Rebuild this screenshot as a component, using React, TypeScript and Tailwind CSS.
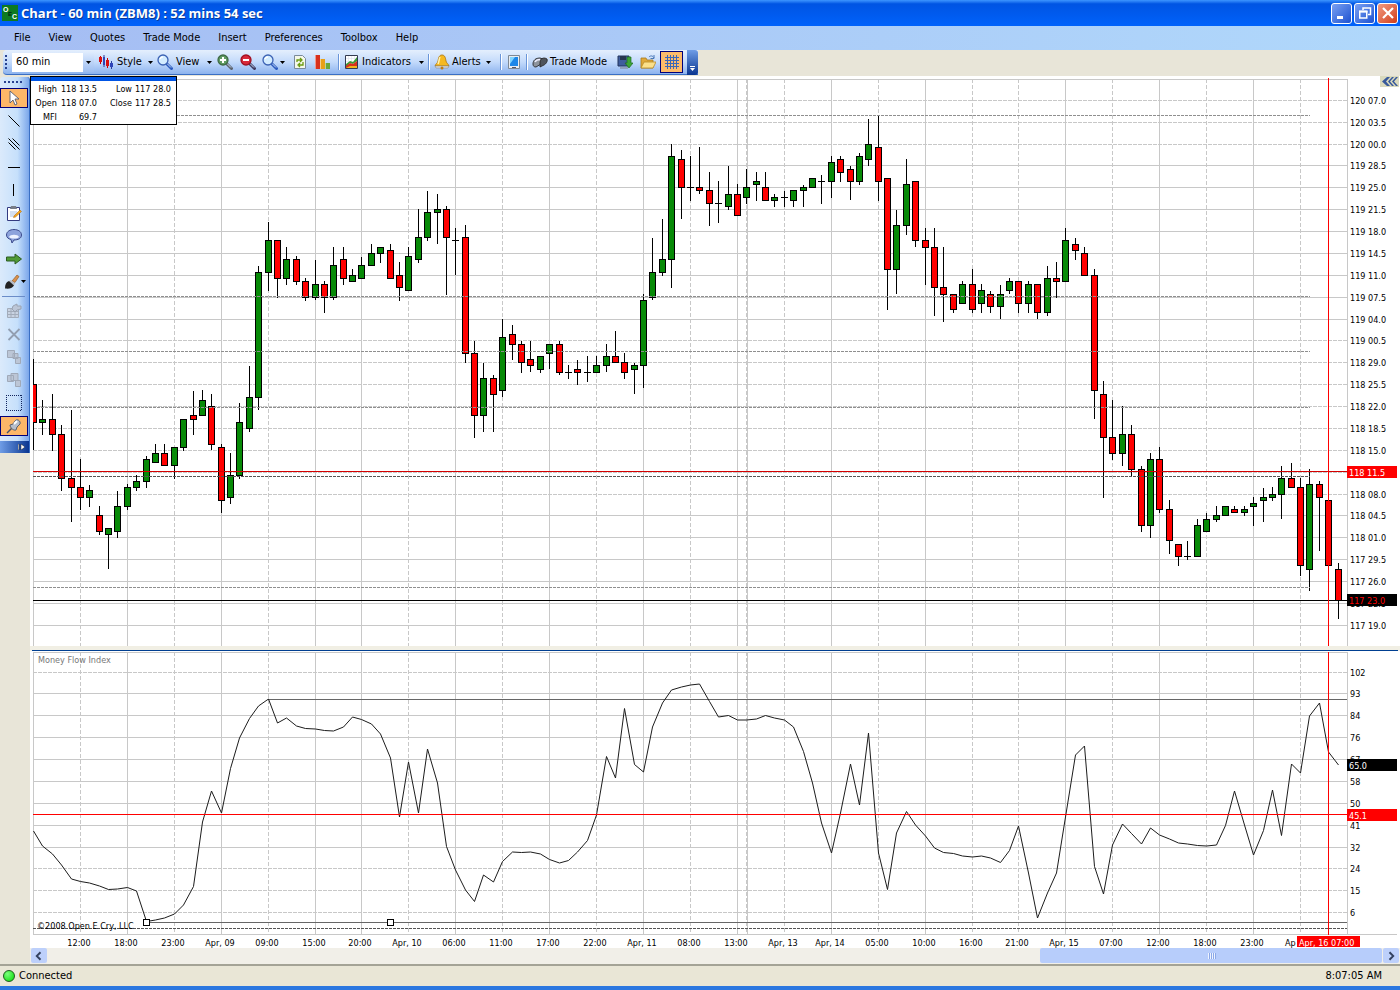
import type { ReactNode } from "react";

type Candle = [high: number, top: number, bottom: number, low: number, dir: "u" | "d" | "n"];

// one entry per bar: high, body top, body bottom, low, direction
const candles: Candle[] = [
  [359, 384, 423, 450, "d"], [400, 419, 423, 435, "u"], [394, 419, 435, 451, "d"], [425, 434, 479, 491, "d"],
  [410, 478, 488, 522, "d"], [459, 487, 498, 510, "d"], [485, 490, 498, 507, "u"], [506, 515, 532, 535, "d"],
  [528, 528, 535, 569, "u"], [491, 506, 532, 538, "u"], [484, 487, 507, 510, "u"], [475, 481, 488, 491, "u"],
  [456, 459, 482, 488, "u"], [444, 453, 463, 463, "u"], [444, 453, 466, 466, "d"], [447, 447, 466, 479, "u"],
  [419, 419, 448, 451, "u"], [391, 415, 420, 435, "d"], [390, 400, 416, 416, "u"], [394, 406, 445, 450, "d"],
  [444, 447, 501, 513, "d"], [453, 475, 498, 504, "u"], [403, 422, 476, 479, "u"], [366, 397, 429, 432, "u"],
  [266, 272, 398, 410, "u"], [222, 240, 273, 291, "u"], [240, 240, 279, 298, "d"], [247, 259, 279, 285, "u"],
  [256, 259, 282, 285, "d"], [278, 281, 298, 301, "d"], [260, 284, 298, 300, "u"], [281, 284, 298, 313, "d"],
  [247, 265, 298, 300, "u"], [247, 259, 279, 285, "d"], [269, 275, 282, 282, "u"], [257, 265, 279, 279, "u"],
  [244, 253, 266, 266, "u"], [247, 247, 254, 263, "u"], [244, 250, 279, 279, "d"], [262, 275, 288, 301, "d"],
  [247, 256, 291, 291, "u"], [209, 237, 260, 263, "u"], [191, 212, 238, 241, "u"], [194, 209, 213, 244, "u"],
  [206, 209, 238, 295, "d"], [228, 240, 241, 275, "n"], [225, 237, 354, 363, "d"], [341, 353, 416, 438, "d"],
  [363, 378, 416, 432, "u"], [375, 378, 395, 432, "d"], [319, 337, 391, 397, "u"], [325, 334, 345, 360, "d"],
  [341, 344, 363, 373, "d"], [341, 359, 366, 372, "d"], [356, 356, 370, 373, "u"], [344, 344, 354, 369, "u"],
  [341, 344, 373, 375, "d"], [365, 372, 373, 379, "n"], [360, 369, 373, 385, "d"], [356, 372, 373, 382, "n"],
  [356, 365, 373, 373, "u"], [344, 356, 366, 372, "u"], [331, 356, 363, 363, "d"], [353, 362, 373, 379, "d"],
  [363, 365, 370, 394, "u"], [294, 300, 366, 388, "u"], [238, 272, 298, 300, "u"], [219, 259, 273, 276, "u"],
  [144, 156, 260, 288, "u"], [150, 159, 188, 219, "d"], [156, 187, 188, 201, "n"], [147, 187, 191, 194, "d"],
  [172, 190, 204, 226, "d"], [181, 203, 204, 223, "n"], [166, 194, 207, 210, "u"], [184, 194, 216, 216, "d"],
  [169, 187, 198, 204, "u"], [172, 181, 185, 201, "u"], [172, 187, 201, 201, "d"], [194, 197, 201, 207, "u"],
  [191, 197, 198, 207, "n"], [190, 190, 201, 207, "u"], [185, 187, 191, 207, "u"], [178, 178, 188, 188, "u"],
  [175, 181, 182, 204, "n"], [156, 162, 182, 198, "u"], [156, 159, 173, 182, "d"], [166, 169, 182, 200, "d"],
  [153, 156, 182, 185, "u"], [119, 144, 160, 166, "u"], [116, 147, 182, 201, "d"], [178, 178, 270, 310, "d"],
  [210, 225, 270, 294, "u"], [159, 184, 226, 235, "u"], [181, 181, 241, 247, "d"], [228, 240, 248, 285, "d"],
  [228, 247, 288, 316, "d"], [247, 287, 295, 322, "d"], [294, 294, 310, 313, "d"], [281, 284, 304, 304, "u"],
  [269, 284, 310, 313, "d"], [284, 290, 304, 313, "u"], [291, 294, 307, 313, "d"], [285, 294, 307, 319, "u"],
  [278, 281, 291, 294, "u"], [281, 281, 304, 313, "d"], [281, 284, 304, 313, "u"], [284, 284, 313, 319, "d"],
  [266, 278, 313, 316, "u"], [262, 278, 282, 298, "d"], [228, 240, 282, 282, "u"], [238, 244, 251, 260, "d"],
  [247, 253, 276, 276, "d"], [269, 275, 391, 419, "d"], [381, 394, 438, 498, "d"], [400, 437, 454, 460, "d"],
  [406, 434, 454, 466, "u"], [425, 434, 470, 476, "d"], [466, 469, 526, 532, "d"], [453, 459, 526, 538, "u"],
  [447, 459, 510, 513, "d"], [500, 509, 541, 554, "d"], [544, 544, 557, 566, "d"], [541, 556, 557, 560, "n"],
  [519, 525, 557, 557, "u"], [513, 519, 532, 532, "u"], [506, 515, 520, 522, "u"], [506, 506, 516, 516, "u"],
  [506, 509, 513, 513, "d"], [506, 509, 513, 516, "u"], [497, 503, 507, 526, "u"], [488, 497, 501, 522, "u"],
  [487, 494, 498, 501, "u"], [466, 478, 495, 519, "u"], [463, 478, 488, 488, "d"], [478, 487, 566, 576, "d"],
  [469, 484, 570, 591, "u"], [481, 484, 498, 551, "d"], [500, 500, 566, 566, "d"], [563, 569, 601, 619, "d"],
];

const mfi = [
  831, 846, 854, 865, 879, 881.5, 883, 886, 889.5, 889, 887.5, 891, 921.5, 920, 918, 914, 905, 886.5, 822, 791,
  813, 768.5, 738, 718.5, 706, 699, 723, 718, 726, 728.5, 729, 730.5, 731, 727, 717, 719.5, 724, 734, 758, 817,
  762, 813, 749, 783, 846.5, 870, 890, 901.5, 875, 882, 861.5, 852, 852.5, 852, 854, 859.5, 863, 860.5, 852, 840.5,
  815, 756.5, 778, 708.5, 764.5, 772, 727, 703, 690, 687, 685, 684, 701.5, 717, 715.5, 720, 720, 719, 715.5, 718,
  720, 727, 751.5, 783, 823, 853, 813, 764, 805, 733, 853, 889.5, 833, 811.5, 825, 836, 848, 852.5, 853.5, 856,
  857, 856, 858, 862.5, 850.5, 826, 873, 918, 893, 873, 817, 755, 746, 866.5, 894, 845, 824, 833.5, 844, 828,
  835, 839, 843, 844, 845.5, 846, 845, 825.5, 791, 825, 855, 830.5, 790, 835.5, 764, 773, 716, 703, 752, 765,
];

const barX = (i: number) => Math.floor(33.46 + 9.386 * i);

type Level = [y: number, label: string, dashed?: boolean];

const priceLevels: Level[] = [
  [100, "120 07.0", true], [122, "120 03.5", true], [144, "120 00.0", true], [165, "119 28.5"], [187, "119 25.0"],
  [209, "119 21.5"], [231, "119 18.0"], [253, "119 14.5"], [275, "119 11.0"], [297, "119 07.5"], [319, "119 04.0"],
  [340, "119 00.5", true], [362, "118 29.0", true], [384, "118 25.5", true], [406, "118 22.0", true],
  [428, "118 18.5", true], [450, "118 15.0", true], [472, "", true], [494, "118 08.0", true], [515, "118 04.5"],
  [537, "118 01.0"], [559, "117 29.5"], [581, "117 26.0"], [603, "117 22.5"], [625, "117 19.0"],
];

const mfiLevels: Level[] = [
  [672, "102", true], [693, "93"], [715, "84"], [737, "76"], [759, "67"], [781, "58"], [803, "50"], [825, "41"],
  [847, "32"], [868, "24", true], [890, "15", true], [912, "6", true],
];

const times: Level[] = [
  [80, "12:00", true], [127, "18:00"], [174, "23:00", true], [221, "Apr, 09"], [268, "09:00", true], [315, "15:00"],
  [361, "20:00"], [408, "Apr, 10", true], [455, "06:00"], [502, "11:00", true], [549, "17:00"], [596, "22:00", true],
  [643, "Apr, 11"], [690, "08:00", true], [737, "13:00"], [746, "", true], [747, ""], [784, "Apr, 13", true],
  [831, "Apr, 14"], [878, "05:00", true], [925, "10:00"], [972, "16:00", true], [1018, "21:00", true],
  [1065, "Apr, 15"], [1112, "07:00", true], [1159, "12:00"], [1206, "18:00", true], [1253, "23:00"], [1300, "", true],
];

const studies = [115, 296, 351, 407, 476, 587];

const GRID = "#c8c8c8";

function GridX({ top, bottom }: { top: number; bottom: number }) {
  return (
    <>
      {times.map(([x, , dashed]) => (
        <line key={x} x1={x + 0.5} x2={x + 0.5} y1={top} y2={bottom} stroke={GRID} strokeDasharray={dashed ? "4 2" : undefined} />
      ))}
      <line x1="33.5" x2="33.5" y1={top} y2={bottom} stroke={GRID} />
      <line x1="1347.5" x2="1347.5" y1={top} y2={bottom} stroke={GRID} />
    </>
  );
}

function GridY({ levels }: { levels: Level[] }) {
  return (
    <>
      {levels.map(([y, label, dashed]) => (
        <g key={y}>
          <line x1="33" x2="1347" y1={y + 0.5} y2={y + 0.5} stroke={GRID} strokeDasharray={dashed ? "4 1" : undefined} />
          <text x="1350" y={y + 4}>{label}</text>
        </g>
      ))}
    </>
  );
}

function Tag({ y, fill, color, label }: { y: number; fill: string; color: string; label: string }) {
  return (
    <g>
      <rect x="1347" y={y} width="50" height="12" fill={fill} />
      <text x="1349" y={y + 10} fill={color}>{label}</text>
    </g>
  );
}

function PriceChart() {
  return (
    <svg
      viewBox="30 76 1370 570"
      className="block w-full bg-white font-['DejaVu_Sans_Condensed','Liberation_Sans',sans-serif] text-[9px]"
      shapeRendering="crispEdges"
      role="img"
      aria-label="ZBM8 60 minute candles"
    >
      <line x1="33" x2="1347" y1="79.5" y2="79.5" stroke={GRID} />
      <GridX top={79} bottom={646} />
      <GridY levels={priceLevels} />
      {candles.map(([high, top, bottom, low, dir], i) => {
        const x = barX(i);
        const left = Math.max(x - 3, 33);
        const width = x + 4 - left;
        return (
          <g key={i}>
            <rect x={x} y={high} width="1" height={low - high} />
            <rect x={left} y={top} width={width} height={bottom - top} />
            {dir !== "n" && (
              <rect
                x={left === 33 ? 33 : left + 1}
                y={top + 1}
                width={left === 33 ? width - 1 : 5}
                height={bottom - top - 2}
                fill={dir === "u" ? "#078a07" : "#ff0000"}
              />
            )}
          </g>
        );
      })}
      {studies.map((y) => (
        <line key={y} x1="33" x2="1310" y1={y + 0.5} y2={y + 0.5} stroke={y === 476 ? "#555" : "#8f8f8f"} strokeDasharray="3 1" />
      ))}
      <line x1="33" x2="1347" y1="471.5" y2="471.5" stroke="#d40000" />
      <line x1="33" x2="1347" y1="600.5" y2="600.5" stroke="#000" />
      <line x1="1328.5" x2="1328.5" y1="78" y2="646" stroke="#f00" />
      <Tag y={466} fill="#f00" color="#fff" label="118 11.5" />
      <Tag y={594} fill="#000" color="#f00" label="117 23.0" />
      <rect x="1380" y="76" width="19" height="11" fill="#d9d9bd" />
      <path d="M1387 77h3l-4 4.500 4 4.500h-3l-5-4.500zM1392 77h2l-4 4.500 4 4.500h-2l-4-4.500zM1396 77h2l-4 4.500 4 4.500h-2l-4-4.500z" fill="#38599b" shapeRendering="auto" />
    </svg>
  );
}

function MoneyFlowChart() {
  return (
    <svg
      viewBox="30 652 1370 296"
      className="block w-full bg-white font-['DejaVu_Sans_Condensed','Liberation_Sans',sans-serif] text-[9px]"
      shapeRendering="crispEdges"
      role="img"
      aria-label="Money Flow Index"
    >
      <line x1="33" x2="1347" y1="652.5" y2="652.5" stroke={GRID} />
      <GridX top={652} bottom={934} />
      <GridY levels={mfiLevels} />
      <line x1="33" x2="1397" y1="934.5" y2="934.5" stroke={GRID} />
      <line x1="268" x2="1347" y1="699.5" y2="699.5" stroke="#666" />
      <line x1="146" x2="1347" y1="922.5" y2="922.5" stroke="#666" />
      <line x1="33" x2="1347" y1="928.5" y2="928.5" stroke="#555" strokeDasharray="3 1" />
      <polyline
        points={mfi.map((y, i) => `${barX(i) + 0.5},${y}`).join(" ")}
        fill="none"
        stroke="#1c1c1c"
        shapeRendering="auto"
      />
      <line x1="33" x2="1347" y1="814.5" y2="814.5" stroke="#f00" />
      <line x1="1328.5" x2="1328.5" y1="652" y2="935" stroke="#f00" />
      <rect x="143.500" y="919.500" width="6" height="6" fill="#fff" stroke="#000" />
      <rect x="387.500" y="919.500" width="6" height="6" fill="#fff" stroke="#000" />
      <text x="38" y="663" fill="#777">Money Flow Index</text>
      <text x="37" y="929">©2008 Open E Cry, LLC</text>
      <Tag y={759} fill="#000" color="#fff" label="65.0" />
      <Tag y={809} fill="#f00" color="#fff" label="45.1" />
      {times.map(([x, label]) => (
        <text key={x} x={x - 1} y="946" textAnchor="middle">{label}</text>
      ))}
      <text x="1285" y="946">Ap</text>
      <rect x="1297" y="936" width="63" height="11" fill="#f00" />
      <text x="1299" y="946" fill="#fff">Apr, 16 07:00</text>
    </svg>
  );
}

function Icon({ children, className = "size-4" }: { children: ReactNode; className?: string }) {
  return (
    <svg viewBox="0 0 16 16" className={`shrink-0 ${className}`} fill="none" aria-hidden>
      {children}
    </svg>
  );
}

function Caret() {
  return (
    <svg viewBox="0 0 5 3" className="h-[3px] w-[5px] shrink-0" aria-hidden>
      <path d="M0 0h5L2.500 3z" />
    </svg>
  );
}

function Lens({ glass = "#d3ecff", rim = "#3c62b4", handle = "#2b5bc0", sign }: { glass?: string; rim?: string; handle?: string; sign?: "+" | "-" }) {
  return (
    <Icon>
      <path d="M9.500 9.500l5 5" stroke={handle} strokeWidth="3" strokeLinecap="round" />
      <path d="M10 9.500l4 4" stroke="#c9dcf5" strokeWidth="1" />
      <circle cx="6" cy="6" r="5" fill={glass} stroke={rim} strokeWidth="1.300" />
      {sign && <path d={sign === "+" ? "M3 6h6M6 3v6" : "M3 6h6"} stroke="#fff" strokeWidth="2" />}
      {!sign && <path d="M3 5c.5-1.500 2-2 3-2" stroke="#fff" strokeWidth="1.500" />}
    </Icon>
  );
}

function TitleBar() {
  const box = "flex size-[21px] items-center justify-center rounded-[3px] border border-white";
  return (
    <header className="flex h-[26px] items-center bg-linear-to-b from-[#3d95ff] via-[#0054e3] via-15% to-[#0062fb] pr-0.5 pl-0.5">
      <svg viewBox="0 0 16 16" className="size-4 font-['Liberation_Sans',sans-serif] font-bold" aria-hidden>
        <rect width="16" height="16" fill="#0d7a20" />
        <text x="1" y="7" fontSize="7" fill="#fff">O</text>
        <text x="6" y="11" fontSize="6" fill="#021">E</text>
        <text x="10" y="14" fontSize="7" fill="#fff">C</text>
      </svg>
      <h1 className="ml-[3px] flex-1 font-['Open_Sans',sans-serif] text-[13px] font-bold text-white [text-shadow:1px_1px_#0a3a96]">
        Chart - 60 min (ZBM8) : 52 mins 54 sec
      </h1>
      <div className="flex gap-0.5">
        <button type="button" aria-label="Minimize" className={`${box} bg-linear-to-br from-[#7ba0f2] to-[#1c50d0]`}>
          <Icon><path d="M3 12.500h6" stroke="#fff" strokeWidth="3" /></Icon>
        </button>
        <button type="button" aria-label="Restore" className={`${box} bg-linear-to-br from-[#7ba0f2] to-[#1c50d0]`}>
          <Icon>
            <path d="M6 5V3h7.500v6.500H11" stroke="#fff" strokeWidth="1.500" />
            <path d="M2.750 6.500h7v6.500h-7z" stroke="#fff" strokeWidth="1.500" />
            <path d="M2 6.500h8.500" stroke="#fff" strokeWidth="2" />
          </Icon>
        </button>
        <button type="button" aria-label="Close" className={`${box} bg-linear-to-br from-[#f09a80] to-[#d0390f]`}>
          <Icon><path d="M3 3l10 10M13 3L3 13" stroke="#fff" strokeWidth="2.200" /></Icon>
        </button>
      </div>
    </header>
  );
}

const menus = ["File", "View", "Quotes", "Trade Mode", "Insert", "Preferences", "Toolbox", "Help"];

function MenuBar() {
  return (
    <nav className="flex h-6 items-center gap-[18px] bg-linear-to-r from-[#a5bdf3] to-[#b0d8fb] pl-3.5">
      {menus.map((m) => (
        <button key={m} type="button">{m}</button>
      ))}
    </nav>
  );
}

function Separator() {
  return <span className="mx-1 h-4 w-0.5 shrink-0 border-r border-white bg-[#6a95d8]" />;
}

function Toolbar() {
  const btn = "flex shrink-0 items-center";
  return (
    <div className="flex h-[26px] items-start">
      <div className="ml-[3px] flex h-[25px] items-center rounded-l-[4px] border-b border-[#3a6fc4] bg-linear-to-b from-[#e4effd] via-[#c3dafb] to-[#8db3ee]">
        <span className="mx-[2px] h-3.5 w-0.5 bg-[repeating-linear-gradient(#27418f_0_2px,transparent_2px_4px)]" />
        <div className="relative ml-[3px] h-[19px] w-[82px] bg-white">
          <select aria-label="Interval" className="h-full w-full appearance-none pl-1 outline-none" defaultValue="60">
            <option value="60">60 min</option>
          </select>
          <span className="pointer-events-none absolute inset-y-0 right-0 flex w-[11px] items-center justify-center bg-linear-to-b from-[#dbe9fd] to-[#9dbdf0]">
            <Caret />
          </span>
        </div>
        <button type="button" className={`${btn} ml-1 w-[58px] gap-[3px]`}>
          <Icon>
            <path d="M2.500 2v8M9.500 4v10" stroke="#c00" />
            <path d="M1 3h3v5H1zM8 6h3v6H8z" fill="#d81010" />
            <path d="M6 1v12M13.500 7v8" stroke="#2a3b9c" />
            <path d="M5 3h2v8H5zM12 9h3v4h-3z" fill="#2e44b8" />
          </Icon>
          <span className="flex-1 text-left">Style</span>
          <Caret />
          <span className="w-0" />
        </button>
        <button type="button" className={`${btn} w-[56px] gap-[3px] pl-px`}>
          <Lens />
          <span className="flex-1 text-left">View</span>
          <Caret />
        </button>
        <button type="button" aria-label="Zoom in" className={`${btn} ml-[5px]`}>
          <Lens glass="#5f9c63" rim="#3f6b46" handle="#5d6470" sign="+" />
        </button>
        <button type="button" aria-label="Zoom out" className={`${btn} ml-[7px]`}>
          <Lens glass="#d8283a" rim="#a01020" handle="#3e3a60" sign="-" />
        </button>
        <button type="button" aria-label="Zoom" className={`${btn} ml-[6px] gap-0.5`}>
          <Lens />
          <Caret />
        </button>
        <button type="button" aria-label="Refresh" className={`${btn} ml-[7px]`}>
          <Icon>
            <path d="M2.500 1.500h8l3 3v10h-11z" fill="#f4f8ea" stroke="#7a8a9a" />
            <path d="M5 8V6h4M8 4l2 2-2 2M11 8v3H7M8 9l-2 2 2 2" stroke="#6a9a10" strokeWidth="1.300" />
          </Icon>
        </button>
        <button type="button" aria-label="Volume" className={`${btn} mr-[3px] ml-[7px]`}>
          <Icon>
            <path d="M0 1h5v14H0z" fill="#d8301c" />
            <path d="M5 5h5v10H5z" fill="#e8a018" />
            <path d="M10 9h5v6h-5z" fill="#6aa83c" />
            <path d="M0 1h1v14H0zM5 5h1v10H5zM10 9h1v6h-1z" fill="#fff" opacity=".5" />
          </Icon>
        </button>
        <Separator />
        <button type="button" className={`${btn} w-[80px] gap-[2px]`}>
          <Icon>
            <path d="M1.500 1.500h12v13h-12z" fill="#fff" stroke="#333a50" />
            <path d="M4.500 2v12M7.500 2v12M10.500 2v12M2 4.500h11M2 7.500h11" stroke="#dde3ee" strokeWidth=".6" />
            <path d="M2 14V10l4-3 3 1 4-5v4l-4 3-3-1z" fill="#3c9a34" />
            <path d="M2 14v-2l4-3 3 1 4-3v7z" fill="#d8301c" />
            <path d="M2 14l4-2h7v2z" fill="#f2b51c" />
          </Icon>
          <span className="flex-1 text-left">Indicators</span>
          <Caret />
        </button>
        <Separator />
        <button type="button" className={`${btn} w-[62px] gap-[2px]`}>
          <Icon>
            <path d="M8 1c3 0 3.500 3 4 6 .3 2 2.500 3 3 5H1c.5-2 2.700-3 3-5 .5-3 1-6 4-6z" fill="#f5b922" stroke="#a8720c" strokeWidth=".8" />
            <path d="M6 3c-1 2-1 5-2 7" stroke="#fff2b0" strokeWidth="1.500" />
            <path d="M1 12h14l-1 2H2z" fill="#e0e0e0" stroke="#888" strokeWidth=".6" />
            <circle cx="8" cy="14" r="1.500" fill="#c07c10" />
          </Icon>
          <span className="flex-1 text-left">Alerts</span>
          <Caret />
          <span className="w-[3px]" />
        </button>
        <Separator />
        <button type="button" aria-label="Device" className={btn}>
          <Icon>
            <path d="M2.500 1.500h11v13h-11z" fill="#e9edf2" stroke="#7d8894" />
            <path d="M4 3h8v9H4z" fill="#1c86e8" />
            <path d="M4 3h5l-5 7z" fill="#7fd4ff" />
            <path d="M6 13.500h4" stroke="#556" />
          </Icon>
        </button>
        <Separator />
        <button type="button" className={`${btn} gap-[2px]`}>
          <Icon>
            <path d="M1 10c0-4 3-6 7-6l3 1-2 5-5 3c-2 0-3-1-3-3z" fill="#8d939c" stroke="#33363c" />
            <path d="M8 8c1-4 4-5 7-3 1 2-1 5-3 6L8 13z" fill="#4f545c" stroke="#222" strokeWidth=".8" />
            <path d="M3 8c1-2 3-2.500 5-2.500" stroke="#eef" strokeWidth="1.500" />
          </Icon>
          <span className="w-[67px] text-left">Trade Mode</span>
        </button>
        <button type="button" aria-label="Save" className={btn}>
          <Icon>
            <path d="M1 2h11v10H1z" fill="#3f5d9c" stroke="#22345c" />
            <path d="M3 2h6v4H3z" fill="#27364f" />
            <path d="M10 3h4v6h2l-4 5-4-5h2z" fill="#3da536" stroke="#1d6a1c" strokeWidth=".7" />
            <path d="M3 13h8v2H3z" fill="#8fa0bd" />
          </Icon>
        </button>
        <button type="button" aria-label="Open" className={`${btn} ml-[7px]`}>
          <Icon>
            <path d="M1 4h5l1 2h6v8H1z" fill="#e0a93a" stroke="#a97b1c" strokeWidth=".8" />
            <path d="M4 8h12l-3 6H1z" fill="#fbe08a" stroke="#b98a24" strokeWidth=".8" />
            <path d="M9 3c2-2 4-1 5 1M14 1v3.500h-3.500" stroke="#4a78b8" />
          </Icon>
        </button>
        <button
          type="button"
          aria-label="Grid"
          aria-pressed="true"
          className="ml-1 flex h-[22px] w-[23px] shrink-0 items-center justify-center border border-[#00007a] bg-[#fdbb6b]"
        >
          <Icon>
            <path d="M3.500 1v14M6.500 1v14M9.500 1v14M12.500 1v14M1 3.500h14M1 6.500h14M1 9.500h14M1 12.500h14" stroke="#3b67b8" />
          </Icon>
        </button>
        <button
          type="button"
          aria-label="More buttons"
          className="ml-1 flex h-[25px] w-[11px] flex-col items-center justify-end gap-px rounded-r-[3px] bg-linear-to-b from-[#6f9de6] to-[#0a3590] pb-1"
        >
          <span className="h-px w-[5px] bg-white" />
          <svg viewBox="0 0 5 3" className="h-[3px] w-[5px]" aria-hidden>
            <path d="M0 0h5L2.500 3z" fill="#fff" />
          </svg>
        </button>
      </div>
    </div>
  );
}

const drawTools: { label: string; icon: ReactNode; active?: boolean }[] = [
  {
    label: "Pointer",
    active: true,
    icon: <path d="M4 1v12l3-3 2 5 2-1-2-5h4z" fill="#fff" stroke="#555b70" strokeWidth=".9" />,
  },
  { label: "Line", icon: <path d="M2.500 2.500l11 11" stroke="#000" /> },
  { label: "Parallel lines", icon: <path d="M2.500 2.500l11 11M6.500 2.500l7 7M2.500 6.500l7 7" stroke="#000" /> },
  { label: "Horizontal line", icon: <path d="M2 8.500h12" stroke="#000" /> },
  { label: "Vertical line", icon: <path d="M7.500 2v12" stroke="#000" /> },
  {
    label: "Note",
    icon: (
      <>
        <path d="M1.500 2.500h12v13h-12z" fill="#fff" stroke="#333a80" />
        <path d="M5 1h5l1 3H4z" fill="#777d88" />
        <path d="M4 7h7M4 9h6M4 11h5" stroke="#a9bfe0" />
        <path d="M8 11l6-6 1.500 1.500-6 5.500-2 .5z" fill="#f7a81c" stroke="#a65f08" strokeWidth=".5" />
      </>
    ),
  },
  {
    label: "Callout",
    icon: (
      <>
        <path d="M8 1.500c4 0 7.500 2 7.500 5.500S12 12 8 12l-2 3-1-3.500C2.500 11 .5 9.500.5 7 .5 3.500 4 1.500 8 1.500z" fill="#8da3dc" stroke="#3c4b8c" />
        <path d="M3 9c2 2 8 2 10 0-1-3-9-3-10 0z" fill="#eef3ff" />
      </>
    ),
  },
  { label: "Arrow", icon: <path d="M.5 6H9V3l6.500 5L9 13v-3H.5z" fill="#4f9a36" stroke="#2d5c22" /> },
  {
    label: "Brush",
    icon: (
      <>
        <path d="M8 7l5-6 2 1.500-4 6z" fill="#d9914c" stroke="#8a5420" strokeWidth=".6" />
        <path d="M5 7l2-1 4 3.500-1 2z" fill="#b8bcc4" />
        <path d="M5 7l5 4.500c-2 3-5 3.500-9 3 0-4 1-6.500 4-7.500z" fill="#222" />
      </>
    ),
  },
];

const editTools: typeof drawTools = [
  {
    label: "Properties",
    icon: (
      <>
        <path d="M1.500 5.500h11v9h-11z" fill="#c9d3e2" stroke="#a3acba" />
        <path d="M1.500 8.500h11M1.500 11.500h11M5 5v9M9 5v9" stroke="#a3acba" />
        <path d="M6 6l1-3 4-2v2h4v3l-4 1-2 2z" fill="#bcc6d6" stroke="#9aa3b2" />
      </>
    ),
  },
  { label: "Delete", icon: <path d="M2.500 3l11 11M13.500 3l-11 11" stroke="#929eb0" strokeWidth="1.800" /> },
  {
    label: "Bring forward",
    icon: <path d="M1.500 1.500h7v7h-7zM7 4.500h5v5H7zM9.500 8.500h5v6h-5z" fill="#bcc6d6" stroke="#a0a9b8" />,
  },
  {
    label: "Send back",
    icon: <path d="M1.500 3.500h6v6h-6zM5 1.500h7v7H5zM9.500 8.500h5v6h-5z" fill="#bcc6d6" stroke="#a0a9b8" />,
  },
  {
    label: "Select area",
    icon: <path d="M0 .5h16M0 15.500h16M.5 0v16M15.500 0v16" stroke="#12255e" strokeDasharray="1 1" shapeRendering="crispEdges" />,
  },
  {
    label: "Pin",
    active: true,
    icon: (
      <>
        <path d="M1 15l5-5" stroke="#44506a" strokeWidth="1.500" />
        <path d="M4 7l3-1 2-3c2-3 6 0 5 3l-3 3-1 3c-2 1-6-2-6-5z" fill="#b6bdca" stroke="#59606e" />
        <path d="M8 6l3-3" stroke="#fff" strokeWidth="2" />
      </>
    ),
  },
];

function ToolButton({ label, icon, active }: (typeof drawTools)[number]) {
  return (
    <button
      type="button"
      aria-label={label}
      aria-pressed={active}
      className="flex h-[23px] w-full items-center py-px"
    >
      <span
        className={`flex h-5 w-7 items-center justify-center gap-px ${active ? "border border-[#00007a] bg-[#fdb768]" : ""} ${label === "Brush" ? "pl-0.5" : ""}`}
      >
        <Icon>{icon}</Icon>
        {label === "Brush" && <Caret />}
      </span>
    </button>
  );
}

function DrawingToolbox() {
  return (
    <aside className="w-[30px] shrink-0 bg-[#e8e5d8]">
      <div className="mt-px flex flex-col rounded-t-[3px] border-r border-[#3a6fc4] bg-linear-to-r from-[#dbeafb] via-[#c6e0fb] via-60% to-[#7ba6ea]">
        <span className="mx-1 mt-1 mb-[3px] h-0.5 w-5 bg-[repeating-linear-gradient(90deg,#27418f_0_2px,transparent_2px_4px)]" />
        {drawTools.map((t) => <ToolButton key={t.label} {...t} />)}
        <span className="mt-[3px] mr-1 mb-0.5 ml-0.5 h-px bg-[#6a8cc8]" />
        {editTools.map((t) => <ToolButton key={t.label} {...t} />)}
        <button
          type="button"
          aria-label="More tools"
          className="mt-1 flex h-3 items-center justify-end bg-linear-to-r from-[#6f9de6] to-[#0a3590] pr-1"
        >
          <svg viewBox="0 0 7 6" className="h-1.5 w-[7px]" aria-hidden>
            <path d="M0 0h1v6H0zM3 0l4 3-4 3z" fill="#fff" stroke="#000" strokeWidth=".4" />
          </svg>
        </button>
      </div>
    </aside>
  );
}

function DataWindow() {
  return (
    <div className="absolute top-0 left-0 w-[147px] border border-black bg-white font-['DejaVu_Sans_Condensed','Liberation_Sans',sans-serif] text-[9px]">
      <div className="h-1 bg-[#0055e5]" />
      <table className="mt-px w-full text-right leading-[14px]">
        <tbody>
          <tr>
            <th className="w-[26px] font-normal">High</th>
            <td className="w-10">118 13.5</td>
            <th className="font-normal">Low</th>
            <td className="w-11 pr-[5px]">117 28.0</td>
          </tr>
          <tr>
            <th className="font-normal">Open</th>
            <td>118 07.0</td>
            <th className="font-normal">Close</th>
            <td className="pr-[5px]">117 28.5</td>
          </tr>
          <tr>
            <th className="font-normal">MFI</th>
            <td>69.7</td>
          </tr>
        </tbody>
      </table>
    </div>
  );
}

function TimeScroller() {
  const arrow = "flex w-4 shrink-0 items-center justify-center rounded-xs bg-[#bdd0fb]";
  return (
    <div className="flex h-4 gap-px bg-[#f1efe8] px-px pb-px">
      <button type="button" aria-label="Scroll left" className={arrow}>
        <Icon className="size-3"><path d="M10 3L5 8l5 5" stroke="#33415f" strokeWidth="2.500" /></Icon>
      </button>
      <div className="flex flex-1 justify-end" role="scrollbar" aria-orientation="horizontal" aria-controls="chart" aria-valuenow={100}>
        <div className="flex w-[342px] items-center justify-center gap-px rounded-xs bg-[#b7cdfb]">
          {[0, 1, 2, 3].map((n) => (
            <span key={n} className="h-1.5 w-px bg-[#eef4ff] shadow-[1px_0_#8ba8e8]" />
          ))}
        </div>
      </div>
      <button type="button" aria-label="Scroll right" className={arrow}>
        <Icon className="size-3"><path d="M6 3l5 5-5 5" stroke="#33415f" strokeWidth="2.500" /></Icon>
      </button>
    </div>
  );
}

function StatusBar() {
  return (
    <footer className="flex h-[22px] items-center border-t-2 border-[#a4a396] bg-[#e9e6d6] pr-[18px] pl-[3px]">
      <span className="size-3 rounded-full border border-[#1d5c1d] bg-radial-[at_35%_30%] from-[#7dff7d] to-[#00d800]" />
      <span className="ml-1 flex-1">Connected</span>
      <time>8:07:05 AM</time>
    </footer>
  );
}

export default function App() {
  return (
    <div className="flex min-h-screen flex-col bg-[#e8e5d8] font-['DejaVu_Sans_Condensed','Noto_Sans',sans-serif] text-[11px] leading-4 text-black">
      <TitleBar />
      <MenuBar />
      <Toolbar />
      <div className="flex">
        <DrawingToolbox />
        <main id="chart" className="relative min-w-0 flex-1">
          <PriceChart />
          <div className="h-1.5 cursor-row-resize border-b border-white bg-[#f1efe4] pt-1">
            <div className="mr-0.5 ml-0.5 h-px bg-[#003f91]" />
          </div>
          <MoneyFlowChart />
          <TimeScroller />
          <DataWindow />
        </main>
      </div>
      <StatusBar />
      <div className="flex-1 bg-[#2b77e0]" />
    </div>
  );
}
